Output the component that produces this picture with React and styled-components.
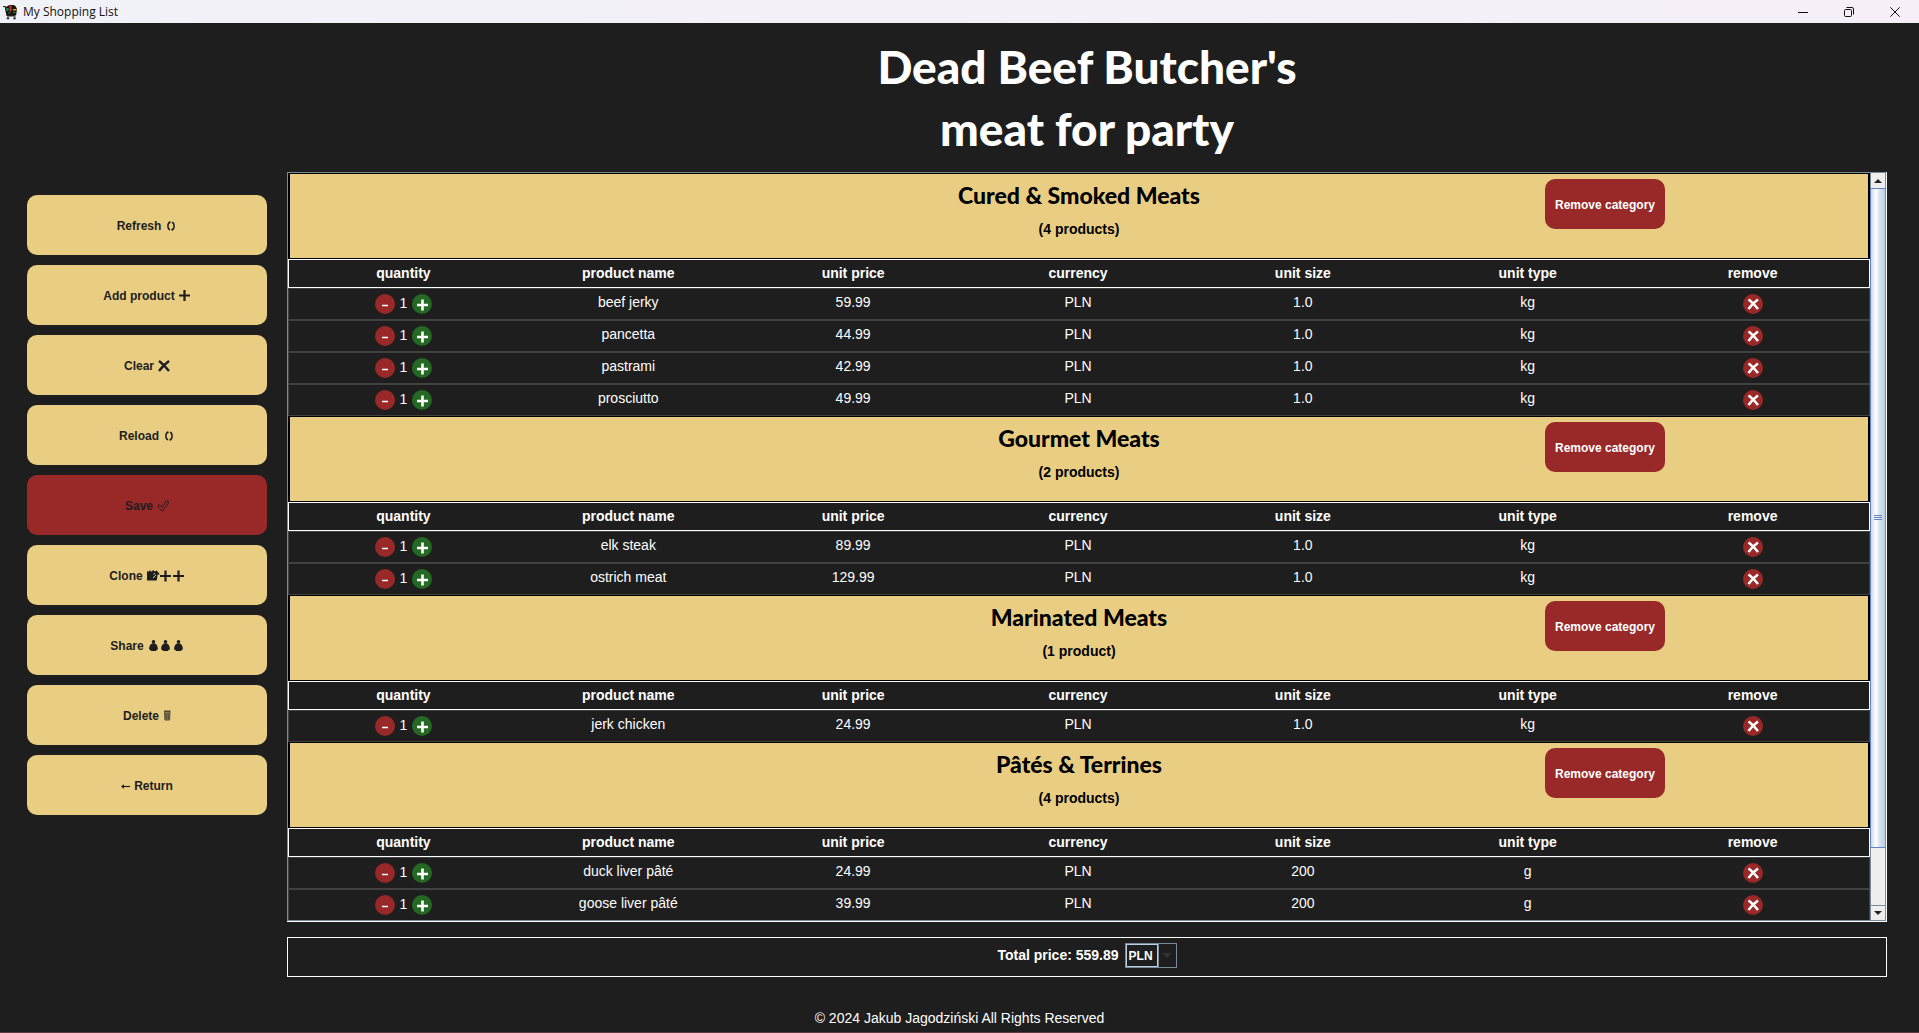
import React from "react";
import styled, { createGlobalStyle } from "styled-components";

const GlobalStyle = createGlobalStyle`
  * { box-sizing: border-box; }
  html, body, #root { height: 100%; }
  body {
    margin: 0;
    background: #1e1e1e;
    color: #fff;
    font-family: "Liberation Sans", Arial, sans-serif;
    font-size: 14px;
    line-height: 16px;
  }
  button, select { font: inherit; cursor: pointer; }
`;

const Window = styled.div`
  display: flex;
  flex-direction: column;
  min-height: 100%;
  border-bottom: 1px solid #5c3a40;
`;

const TitleBar = styled.header`
  display: flex;
  align-items: center;
  height: 23px;
  padding: 0 1px 0 3px;
  background: linear-gradient(90deg, #f1f1f8, #f6eff7);
  color: #111;
  font: 12px/16px "Open Sans", "Noto Sans", sans-serif;
`;

const AppName = styled.span`
  flex: 1;
  padding-left: 5px;
`;

const WindowButton = styled.button`
  display: grid;
  place-items: center;
  width: 46px;
  height: 23px;
  padding: 0;
  border: 0;
  background: none;
`;

const Body = styled.div`
  display: grid;
  grid-template-columns: 240px minmax(0, 1fr);
  column-gap: 20px;
  padding: 0 32px 0 27px;
`;

const ListTitle = styled.h1`
  grid-column: 2;
  margin: 0;
  padding: 13px 0 12px;
  text-align: center;
  font: 900 46px/62px Lato, "Liberation Sans", sans-serif;
`;

const Sidebar = styled.nav`
  display: flex;
  flex-direction: column;
  gap: 10px;
  padding-top: 23px;
`;

const SideButton = styled.button`
  display: flex;
  align-items: center;
  justify-content: center;
  gap: 4px;
  height: 60px;
  padding: 2px 0 0;
  border: 0;
  border-radius: 10px;
  background: ${(p) => (p.$danger ? "#992828" : "#e9cd82")};
  color: #1e1e1e;
  font-size: 12px;
  font-weight: bold;
`;

const Main = styled.main`
  display: flex;
  flex-direction: column;
  gap: 15px;
`;

const ScrollPane = styled.div`
  display: flex;
  height: 750px;
  border: solid #fff;
  border-width: 0 1px 1px 0;
`;

const ScrollFrame = styled.div`
  display: flex;
  flex: 1;
  min-width: 0;
  border: 1px solid #7a8a99;
`;

const Viewport = styled.div`
  flex: 1;
  min-width: 0;
  overflow: hidden;
`;

const CategoryCard = styled.section`
  display: grid;
  grid-template-columns: repeat(3, 1fr);
  justify-items: center;
  align-items: start;
  height: 86px;
  padding-top: 5px;
  border: solid #000;
  border-width: 1px 2px;
  background: #e9cd82;
  color: #000;
`;

const CategoryText = styled.div`
  grid-column: 2;
  text-align: center;
`;

const CategoryName = styled.h2`
  margin: 0;
  font: 900 23px/32px Lato, "Liberation Sans", sans-serif;
`;

const CategoryCount = styled.p`
  margin: 10px 0 0;
  font-weight: bold;
`;

const RemoveCategory = styled.button`
  width: 120px;
  height: 50px;
  padding: 2px 0 0;
  border: 0;
  border-radius: 10px;
  background: #992828;
  color: #fff;
  font-size: 12px;
  font-weight: bold;
`;

const Table = styled.table`
  display: block;
  thead, tbody { display: block; }
`;

const Row = styled.tr`
  display: grid;
  grid-template-columns: repeat(7, 1fr);
  height: ${(p) => (p.$head ? 29 : 32)}px;
  padding: 5px 4px 0 2px;
  border: 1px solid ${(p) => (p.$head ? "#fff" : "#414141")};
`;

const HeadCell = styled.th`
  padding: 0;
  text-align: center;
`;

const Cell = styled.td`
  display: flex;
  justify-content: center;
  align-items: flex-start;
  padding: 0;
`;

const QuantityBox = styled.div`
  display: flex;
  align-items: flex-start;
  gap: 5px;
  line-height: 18px;
`;

const RoundButton = styled.button`
  display: grid;
  place-items: center;
  width: 20px;
  height: 20px;
  padding: 0;
  border: 0;
  border-radius: 50%;
  background: ${(p) => (p.$green ? "#246824" : "#992828")};
`;

const ScrollBar = styled.div`
  display: flex;
  flex-direction: column;
  width: 15px;
  border-left: 1px solid #7a8a99;
  background: #eee;
`;

const ArrowButton = styled.button`
  display: grid;
  place-items: center;
  height: 15px;
  padding: 0;
  border: solid #7a8a99;
  border-width: ${(p) => (p.$down ? "1px 0 0" : "0")};
  background: #eee;
`;

const Track = styled.div`
  flex: 1;
  display: flex;
  flex-direction: column;
`;

const Thumb = styled.div`
  display: grid;
  place-items: center;
  height: 92%;
  margin-left: -1px;
  border: 1px solid #6382bf;
  border-right: 0;
  background: linear-gradient(90deg, #c8d8ec, #fff 35%, #d8e4f0 60%, #b8cfe5);
`;

const TotalBar = styled.div`
  display: flex;
  align-items: flex-start;
  justify-content: center;
  gap: 6px;
  height: 40px;
  padding-top: 5px;
  border: 1px solid #fff;
  font-weight: bold;
  line-height: 24px;
`;

const CurrencyBox = styled.div`
  display: grid;
  grid-template-columns: 32px 18px;
  grid-template-rows: 23px;
  width: 52px;
  height: 25px;
  border: 1px solid #7a8a99;
  & > * { grid-row: 1; }
`;

const CurrencySelect = styled.select`
  grid-column: 1 / 3;
  appearance: none;
  width: 32px;
  height: 23px;
  padding: 0 0 0 2px;
  border: 1px solid #b8cfe5;
  border-radius: 0;
  outline: 0;
  background: transparent;
  color: #fff;
  font-size: 12px;
  font-weight: bold;
  line-height: 20px;
`;

const DropMark = styled.span`
  grid-column: 2;
  display: grid;
  place-items: center;
  border-left: 1px solid #7a8a99;
  pointer-events: none;
`;

const Footer = styled.footer`
  margin-top: auto;
  padding-bottom: 6px;
  text-align: center;
`;

const Svg = ({ w, h, children, ...rest }) => (
  <svg width={w} height={h} viewBox={`0 0 ${w} ${h}`} fill="none" aria-hidden="true" {...rest}>
    {children}
  </svg>
);

const CycleIcon = () => (
  <Svg w={12} h={12}>
    <path d="M5 2.300C2.200 3 2.200 9 5 9.700M7 2.300c2.800.7 2.800 6.700 0 7.400" stroke="#1e1e1e" strokeWidth="1.500" />
    <path d="M3.600 1.600h2v2zM8.400 10.400h-2v-2z" fill="#1e1e1e" />
  </Svg>
);
const PlusIcon = () => (
  <Svg w={12} h={12}>
    <path d="M5.500 0v11M0 5.500h11" stroke="#1e1e1e" strokeWidth="2.200" />
  </Svg>
);
const CrossIcon = () => (
  <Svg w={12} h={12}>
    <path d="M1 1C4 3 8 7.500 11 11M11 1C7.500 3.500 3.500 7.500 1 11" stroke="#1e1e1e" strokeWidth="2.400" />
  </Svg>
);
const CheckIcon = () => (
  <Svg w={12} h={12}>
    <path d="M.7 6.200L2.500 4.600 5 7.400 9.300.8l2.100.6v1.600L5.200 11.300z" stroke="#1e1e1e" />
  </Svg>
);
const CloneIcon = () => (
  <Svg w={38} h={12}>
    <path d="M0 1l1.500.8L3 .2 4.500 1.800 6.200 0 7.600 1.600l1.800-1L11.600 2.600 12.600 4.800l-2-.4L9.800 10.600H0z" fill="#1e1e1e" />
    <path d="M6 8L9 5M6.400 4.200l1.600-.8" stroke="#e9cd82" />
    <path d="M18.500.500v11M13 6h11M31.500.500v11M26 6h11" stroke="#1e1e1e" strokeWidth="2.200" />
  </Svg>
);
const PeopleIcon = () => (
  <Svg w={36} h={12}>
    {[5.500, 17.500, 30.500].map((x) => (
      <g key={x} fill="#1e1e1e">
        <circle cx={x} cy="1.800" r="1.800" />
        <path d={`M${x} 3.200c2.800 0 4.400 2.600 4.400 6.300l-1.600.5v1H${x - 2.8}v-1l-1.600-.5c0-3.700 1.600-6.300 4.400-6.300z`} />
      </g>
    ))}
  </Svg>
);
const TrashIcon = () => (
  <Svg w={8} h={12}>
    <path d="M1.500 1.500h5.500l-.4 8.500H1.900z" fill="#8c7c50" stroke="#5a5038" />
    <path d="M1 1h6.500M3.200 3v6M5.200 3v6" stroke="#4a4232" />
  </Svg>
);
const ArrowIcon = () => (
  <Svg w={9} h={12}>
    <path d="M1 6.500h8" stroke="#1e1e1e" strokeWidth="1.200" />
    <path d="M0 6.500L3 4.200v4.600z" fill="#1e1e1e" />
  </Svg>
);
const CartIcon = () => (
  <Svg w={15} h={16}>
    <path d="M0 2.500h2.200L4 11.500h8.500" stroke="#2a2522" strokeWidth="1.200" />
    <path d="M2 4l2.500-2L6.500 1h4L12.500 2l1.500 3-.8 6H4z" fill="#17130f" />
    <path d="M3 4h2.500v3H3.500z" fill="#1b8a5a" />
    <path d="M6.500 1.500h2v6h-2z" fill="#c4401f" />
    <path d="M10 5h3.500v1.500H10z" fill="#e2a21e" />
    <path d="M5 9h2.500M10 8.500h2.500" stroke="#2e8b57" />
    <path d="M4 12.500h9" stroke="#8a8a8a" />
    <circle cx="5" cy="14.300" r="1.300" fill="#444" />
    <circle cx="11.500" cy="14.300" r="1.300" fill="#444" />
  </Svg>
);

const ACTIONS = [
  { label: "Refresh", Icon: CycleIcon },
  { label: "Add product", Icon: PlusIcon },
  { label: "Clear", Icon: CrossIcon },
  { label: "Reload", Icon: CycleIcon },
  { label: "Save", Icon: CheckIcon, danger: true },
  { label: "Clone", Icon: CloneIcon },
  { label: "Share", Icon: PeopleIcon },
  { label: "Delete", Icon: TrashIcon },
  { label: "Return", Icon: ArrowIcon, leading: true },
];

const COLUMNS = ["quantity", "product name", "unit price", "currency", "unit size", "unit type", "remove"];

const CATEGORIES = [
  {
    name: "Cured & Smoked Meats",
    count: "(4 products)",
    items: [
      ["beef jerky", "59.99", "1.0", "kg"],
      ["pancetta", "44.99", "1.0", "kg"],
      ["pastrami", "42.99", "1.0", "kg"],
      ["prosciutto", "49.99", "1.0", "kg"],
    ],
  },
  {
    name: "Gourmet Meats",
    count: "(2 products)",
    items: [
      ["elk steak", "89.99", "1.0", "kg"],
      ["ostrich meat", "129.99", "1.0", "kg"],
    ],
  },
  { name: "Marinated Meats", count: "(1 product)", items: [["jerk chicken", "24.99", "1.0", "kg"]] },
  {
    name: "Pâtés & Terrines",
    count: "(4 products)",
    items: [
      ["duck liver pâté", "24.99", "200", "g"],
      ["goose liver pâté", "39.99", "200", "g"],
    ],
  },
];

function Quantity({ product }) {
  return (
    <QuantityBox>
      <RoundButton aria-label={`Decrease ${product}`}>
        <Svg w={20} h={20}>
          <path d="M7 11.500h6" stroke="#fff" strokeWidth="1.500" />
        </Svg>
      </RoundButton>
      <span>1</span>
      <RoundButton $green aria-label={`Increase ${product}`}>
        <Svg w={20} h={20}>
          <path d="M10.500 5.500v11M5 11h11" stroke="#fff" strokeWidth="2.600" />
        </Svg>
      </RoundButton>
    </QuantityBox>
  );
}

function ProductRow({ item: [name, price, size, type] }) {
  return (
    <Row>
      <Cell><Quantity product={name} /></Cell>
      <Cell>{name}</Cell>
      <Cell>{price}</Cell>
      <Cell>PLN</Cell>
      <Cell>{size}</Cell>
      <Cell>{type}</Cell>
      <Cell>
        <RoundButton aria-label={`Remove ${name}`}>
          <Svg w={20} h={20}>
            <path d="M5.500 5.500c3 2 7 6.500 9.500 9.500M15 5.500c-3.500 2.500-7 6-9.500 9.500" stroke="#fff" strokeWidth="2.600" />
          </Svg>
        </RoundButton>
      </Cell>
    </Row>
  );
}

function Category({ name, count, items }) {
  return (
    <>
      <CategoryCard>
        <CategoryText>
          <CategoryName>{name}</CategoryName>
          <CategoryCount>{count}</CategoryCount>
        </CategoryText>
        <RemoveCategory>Remove category</RemoveCategory>
      </CategoryCard>
      <Table aria-label={name}>
        <thead>
          <Row $head>
            {COLUMNS.map((c) => <HeadCell key={c} scope="col">{c}</HeadCell>)}
          </Row>
        </thead>
        <tbody>
          {items.map((item) => <ProductRow key={item[0]} item={item} />)}
        </tbody>
      </Table>
    </>
  );
}

export default function App() {
  return (
    <Window>
      <GlobalStyle />
      <TitleBar>
        <CartIcon />
        <AppName>My Shopping List</AppName>
        <WindowButton aria-label="Minimize">
          <Svg w={10} h={10}><path d="M0 5.500h10" stroke="#111" /></Svg>
        </WindowButton>
        <WindowButton aria-label="Restore">
          <Svg w={10} h={10}>
            <rect x=".5" y="2.500" width="7" height="7" rx="1" stroke="#111" />
            <path d="M2.500.5H8A1.500 1.500 0 0 1 9.500 2v5.500" stroke="#111" />
          </Svg>
        </WindowButton>
        <WindowButton aria-label="Close">
          <Svg w={10} h={10}><path d="M.3.3l9.400 9.400M9.700.3L.3 9.700" stroke="#111" /></Svg>
        </WindowButton>
      </TitleBar>
      <Body>
        <ListTitle>Dead Beef Butcher's<br />meat for party</ListTitle>
        <Sidebar aria-label="List actions">
          {ACTIONS.map(({ label, Icon, danger, leading }) => (
            <SideButton key={label} $danger={danger}>
              {leading && <Icon />}
              {label}
              {!leading && <Icon />}
            </SideButton>
          ))}
        </Sidebar>
        <Main>
          <ScrollPane>
            <ScrollFrame>
              <Viewport>
                {CATEGORIES.map((c) => <Category key={c.name} {...c} />)}
              </Viewport>
              <ScrollBar>
                <ArrowButton aria-label="Scroll up">
                  <Svg w={8} h={4}><path d="M0 4l4-4 4 4z" fill="#222" /></Svg>
                </ArrowButton>
                <Track>
                  <Thumb>
                    <Svg w={8} h={6}><path d="M0 .5h8M0 2.500h8M0 4.500h8" stroke="#6382bf" /></Svg>
                  </Thumb>
                </Track>
                <ArrowButton $down aria-label="Scroll down">
                  <Svg w={8} h={4}><path d="M0 0l4 4 4-4z" fill="#222" /></Svg>
                </ArrowButton>
              </ScrollBar>
            </ScrollFrame>
          </ScrollPane>
          <TotalBar>
            <label htmlFor="currency">Total price: 559.89</label>
            <CurrencyBox>
              <CurrencySelect id="currency" defaultValue="PLN">
                <option>PLN</option>
                <option>EUR</option>
                <option>USD</option>
              </CurrencySelect>
              <DropMark>
                <Svg w={10} h={5}><path d="M0 0h10L5 5z" fill="#333" /></Svg>
              </DropMark>
            </CurrencyBox>
          </TotalBar>
        </Main>
      </Body>
      <Footer>© 2024 Jakub Jagodziński All Rights Reserved</Footer>
    </Window>
  );
}
